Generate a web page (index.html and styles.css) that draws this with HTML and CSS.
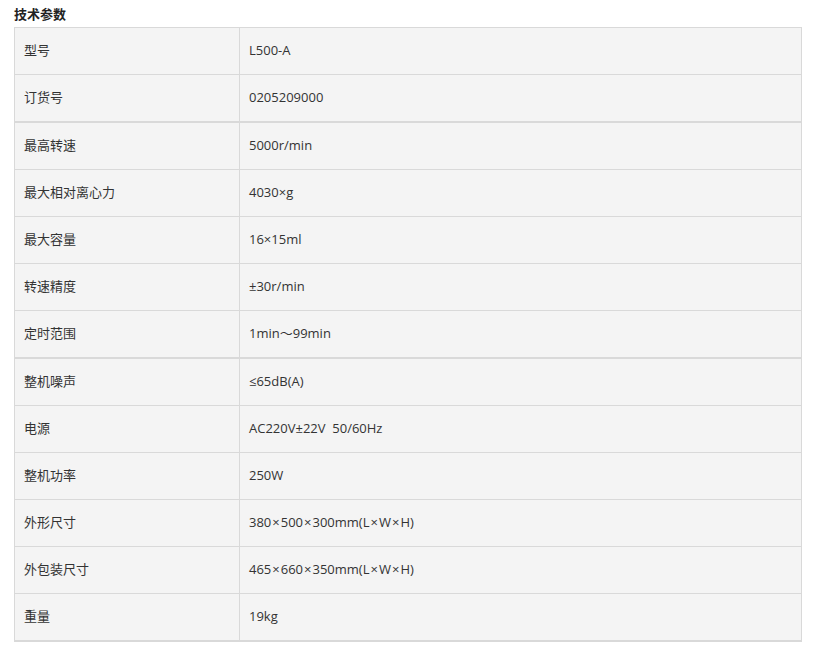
FILE: index.html
```html
<!DOCTYPE html>
<html lang="zh-CN">
<head>
<meta charset="utf-8">
<title>技术参数</title>
<link rel="stylesheet" href="styles.css">
</head>
<body>
<div class="page">
  <h3 class="title">技术参数</h3>
  <div class="spec">
    <div class="group">
      <div class="row"><div class="k">型号</div><div class="v">L500-A</div></div>
      <div class="row"><div class="k">订货号</div><div class="v">0205209000</div></div>
    </div>
    <div class="group">
      <div class="row"><div class="k">最高转速</div><div class="v">5000r/min</div></div>
      <div class="row"><div class="k">最大相对离心力</div><div class="v">4030×g</div></div>
      <div class="row"><div class="k">最大容量</div><div class="v">16×15ml</div></div>
      <div class="row"><div class="k">转速精度</div><div class="v">±30r/min</div></div>
      <div class="row"><div class="k">定时范围</div><div class="v">1min～99min</div></div>
    </div>
    <div class="group">
      <div class="row"><div class="k">整机噪声</div><div class="v">≤65dB(A)</div></div>
      <div class="row"><div class="k">电源</div><div class="v">AC220V±22V&nbsp;&nbsp;50/60Hz</div></div>
      <div class="row"><div class="k">整机功率</div><div class="v">250W</div></div>
      <div class="row"><div class="k">外形尺寸</div><div class="v">380<span class="x">×</span>500<span class="x">×</span>300mm(L<span class="x">×</span>W<span class="x">×</span>H)</div></div>
      <div class="row"><div class="k">外包装尺寸</div><div class="v">465<span class="x">×</span>660<span class="x">×</span>350mm(L<span class="x">×</span>W<span class="x">×</span>H)</div></div>
      <div class="row"><div class="k">重量</div><div class="v">19kg</div></div>
    </div>
  </div>
</div>
</body>
</html>
```
FILE: styles.css
```css
html, body {
  margin: 0;
  padding: 0;
  background: #ffffff;
}
.page {
  padding: 4px 0 0 14px;
  width: 788px;
  font-family: "Open Sans", "Noto Sans CJK SC", sans-serif;
  font-size: 13px;
  color: #333333;
}
.title {
  margin: 0 0 3px 0;
  height: 20px;
  line-height: 20px;
  font-size: 13px;
  font-weight: bold;
  font-family: "Noto Sans CJK SC", sans-serif;
  color: #222222;
}
.spec {
  border-bottom: 1px solid #d9d9d9;
}
.group {
  border: 1px solid #d9d9d9;
  background: #f4f4f4;
}
.row {
  display: grid;
  grid-template-columns: 225px 1fr;
  height: 46px;
}
.row + .row {
  border-top: 1px solid #d9d9d9;
}
.k, .v {
  display: flex;
  align-items: center;
  padding-left: 9px;
  padding-bottom: 3px;
}
.k {
  border-right: 1px solid #d9d9d9;
  font-family: "Noto Sans CJK SC", sans-serif;
}
.x {
  padding: 0 1px;
}
```
